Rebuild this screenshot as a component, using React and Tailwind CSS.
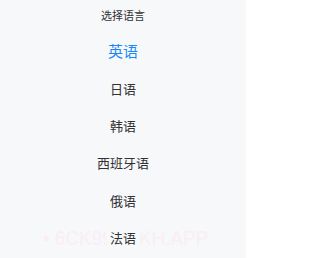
import React, { useState } from 'react';

const languages = ['英语', '日语', '韩语', '西班牙语', '俄语', '法语'];

const App = () => {
  const [selected, setSelected] = useState('英语');

  return (
    <div
      className="relative h-[258px] w-[246px] overflow-hidden bg-[#f7f8fa] text-[#323233]"
      style={{ fontFamily: '"Noto Sans CJK SC", "Noto Sans", sans-serif' }}
    >
      {/* watermark, sits behind the list */}
      <div
        className="pointer-events-none absolute left-[43px] top-[226px] origin-left scale-x-90 whitespace-nowrap text-[21px] leading-[24px] text-[#fbedf5]"
        style={{ fontFamily: '"Liberation Sans", Arial, sans-serif' }}
      >
        • 6CK999MKH.APP
      </div>

      <div className="relative">
        <div className="flex h-[30px] items-center justify-center text-[11px]">选择语言</div>
        <ul className="mt-[3px]">
          {languages.map((lang) => (
            <li
              key={lang}
              onClick={() => setSelected(lang)}
              className={
                lang === selected
                  ? 'flex h-[37.2px] cursor-pointer items-center justify-center text-[15px] text-[#1989fa]'
                  : 'flex h-[37.2px] cursor-pointer items-center justify-center text-[13px]'
              }
            >
              <span className="bg-[#f7f8fa] px-[3px]">{lang}</span>
            </li>
          ))}
        </ul>
      </div>
    </div>
  );
};

export default App;
